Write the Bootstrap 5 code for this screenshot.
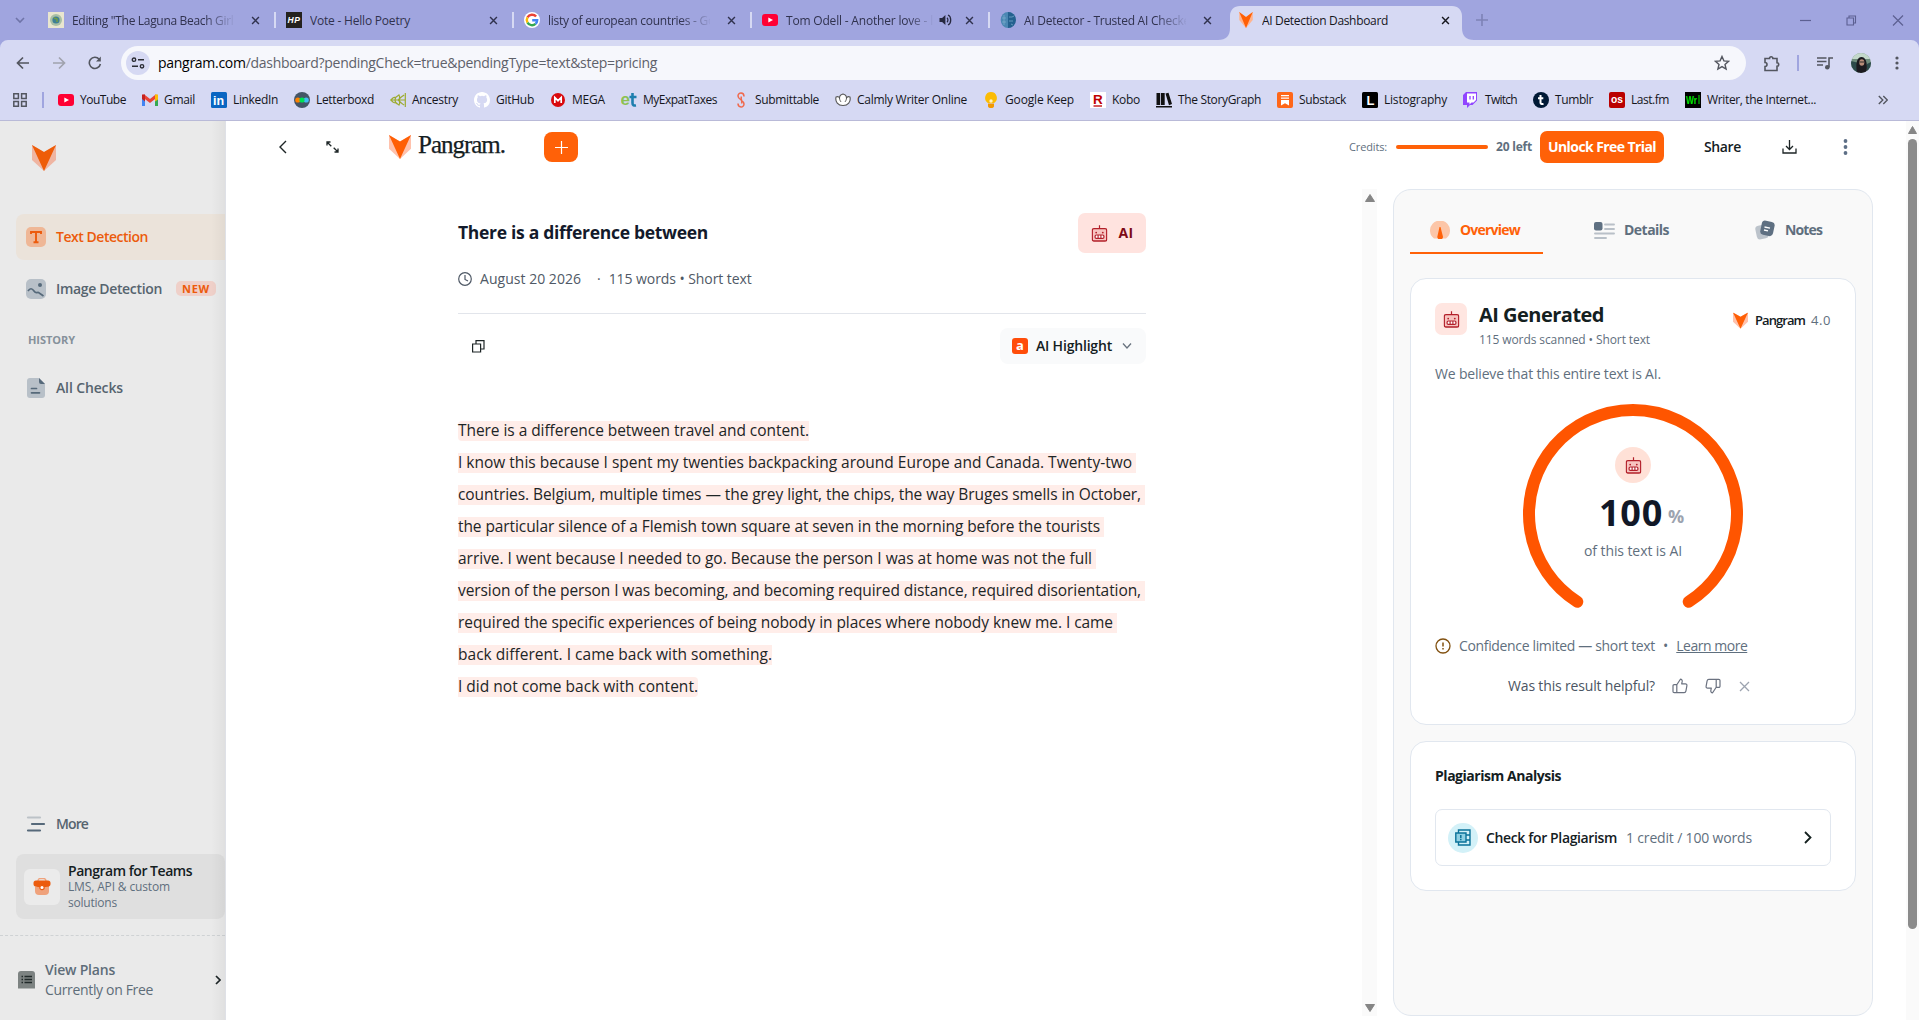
<!DOCTYPE html>
<html lang="en">
<head>
<meta charset="utf-8">
<title>AI Detection Dashboard</title>
<link href="https://cdn.jsdelivr.net/npm/bootstrap@5.3.0/dist/css/bootstrap.min.css" rel="stylesheet">
<style>
:root{--ui:"Open Sans","Noto Sans",sans-serif;--or:#ff5c00;--slate:#5f6f7e;--ink:#14201f;--line:#e1e7ef}
body{width:1919px;height:1020px;overflow:hidden;font-family:var(--ui);font-size:14px;line-height:20px;color:var(--ink);background:#fff}
svg{display:block;flex:none}
svg text{font-family:"Liberation Sans",sans-serif}
[data-w]{display:inline-block;white-space:nowrap;flex:none}
.w5{font-weight:550}.w6{font-weight:680}
.mut{color:var(--slate)}
/* browser chrome */
.tabstrip{height:40px;background:#a0a5df;padding-left:37px;font-size:12px;color:#30324e}
.btab{width:238px;padding:0 11px 0 11px;height:40px;position:relative;flex:none}
.btab::after{content:"";position:absolute;right:-1px;top:12px;width:2px;height:16px;background:#d6d9f3}
.btab.on::after,.btab.nosep::after{display:none}
.btab .ttl{width:162px;overflow:hidden;white-space:nowrap;margin-left:8px;padding-top:1px}
.btab .dim{-webkit-mask-image:linear-gradient(90deg,#000 132px,transparent 164px)}
.btab .snd{width:148px}
.btab .snd.dim{-webkit-mask-image:linear-gradient(90deg,#000 122px,transparent 148px)}
.btab.on{color:#16171d}
.shape{position:absolute;left:-9px;top:6px;z-index:0}
.btab.on>*:not(.shape){position:relative;z-index:1}
.toolbox{background:#d6d9f3;height:81px;border-bottom:1px solid #b9bad8;position:relative}
.addr{height:46px;padding:0 13px}
.omni{width:1625px;height:34px;border-radius:17px;background:#f6f7fc;padding:0 16px 0 5px;font-size:14px;color:#5e616a}
.tune{width:24px;height:24px;border-radius:50%;background:#d6d9f3}
.bm{height:34px;margin-top:-3px;font-size:12px;color:#15161c;padding-left:13px}
.bm .bmi{gap:6px;margin-right:16px}
.vbar{width:2px;height:16px;background:#a0a5df;flex:none}
/* page */
.page{height:899px}
.side{width:226px;background:#eaeaea;flex:none;border-right:1px solid #dfe1e7;position:relative}
.side::after{content:"";position:absolute;right:0;top:0;bottom:0;width:14px;background:linear-gradient(90deg,transparent,rgba(0,0,0,.045))}
.navi{height:45px;margin-left:16px;padding-left:10px;border-radius:8px 0 0 8px;color:#56646f;gap:10px}
.navi.on{background:#ebe3da;color:#ec5b0c;height:46px}
.newb{background:#efd0c9;color:#ec5b0c;border-radius:5px;height:15px;width:40px;font-size:11px;line-height:15px;margin-left:4px;font-weight:700}
.teams{margin-left:16px;height:65px;background:#dfdfdf;border-radius:8px;padding-left:8px;gap:8px}
.tbox{width:36px;height:36px;background:#ebebeb;border-radius:6px;flex:none}
.dash{border-top:1px dashed #cfd2d4}
.main{width:1680px;flex:none}
.hdr{height:52px}
.word{font-family:"Liberation Serif",serif;font-size:25px;line-height:30px;color:#14201f;font-weight:400;-webkit-text-stroke:.25px #14201f}
.plus{width:34px;height:30px;border-radius:8px;background:#ff6108}
.unlock{width:124px;height:32px;border-radius:7px;background:#ff6108;color:#fff}
.cbar{width:92px;height:4px;border-radius:2px;background:#ff6108}
.doc{width:688px;margin-left:232px}
.aib{width:68px;height:40px;border-radius:7px;background:#ffe3df;color:#7d0b15}
.hl{width:146px;height:36px;border-radius:8px;background:#f9fafb;padding-left:12px}
.abox{width:16px;height:16px;border-radius:3px;background:#ff4d0a;color:#fff;font-size:13px;line-height:14px;font-weight:700}
.ln{height:32px}
.ln>span{background:#ffede9;height:20px;line-height:19px;font-size:15.5px;color:#1d2526}
.rail{width:15px;background:#fafafa}
.panel{width:480px;height:827px;border:1px solid var(--line);border-radius:18px;background:#f9f9f9;padding:0 16px}
.tabs3{height:64px}
.pt{height:64px;border-bottom:2px solid transparent;padding-top:18px;gap:10px}
.pt.on{border-color:#ff6108;color:#ff6108}
.box{border:1px solid var(--line);border-radius:16px;background:#fff;padding:0 24px}
.rb{width:32px;height:32px;border-radius:7px;background:#ffe6e1}
.gauge{position:relative;height:206px}
.gauge .inr{position:absolute;inset:0}
.rc{width:36px;height:36px;border-radius:50%;background:#ffe1d7}
.chk{height:57px;border:1px solid var(--line);border-radius:7px;padding-left:12px;padding-right:18px}
.pc{width:30px;height:30px;border-radius:50%;background:#d3f1f8}
.sb{width:13px;background:#fafafa;flex:none}
.thumb{width:9px;height:790px;border-radius:5px;background:#8b8b8b;margin-left:2px}
</style>
<script src="https://cdn.jsdelivr.net/npm/bootstrap@5.3.0/dist/js/bootstrap.bundle.min.js"></script>
</head>
<body>
<svg width="0" height="0" class="position-absolute"><defs>
<symbol id="x" viewBox="0 0 10 10"><path d="M1.2 1.2l7.6 7.6M8.8 1.2l-7.6 7.6" stroke="currentColor" stroke-width="1.6" fill="none"/></symbol>
<symbol id="fox" viewBox="0 0 24 26"><path d="M0 0v15l12 11 12-11V0L12 7z" fill="#ffc2ad"/><path d="M0 0l12 7 12-7-12 26z" fill="#ff5f05"/></symbol>
<symbol id="foxs" viewBox="0 0 24 26"><path d="M0 0v15l12 11 12-11V0L12 7z" fill="#efb5a2"/><path d="M0 0l12 7 12-7-12 26z" fill="#ee5c08"/></symbol>
<symbol id="bot" viewBox="0 0 16 17"><rect x=".8" y="3.6" width="14.4" height="12.4" rx="1.6" fill="#f7c4c0" stroke="#b3202a" stroke-width="1.3"/><path d="M8 .2v3.4" stroke="#b3202a" stroke-width="1.2"/><circle cx="4.7" cy="7.6" r=".9" fill="#b3202a"/><circle cx="11.3" cy="7.6" r=".9" fill="#b3202a"/><rect x="3.6" y="10" width="8.8" height="3.4" rx="1.2" fill="#fff" stroke="#b3202a" stroke-width="1.2"/><path d="M6.6 10v3.4M9.4 10v3.4" stroke="#b3202a" stroke-width="1.1"/></symbol>
<symbol id="thumb" viewBox="0 0 16 16"><path d="M4.8 14.6H2.2A1.2 1.2 0 0 1 1 13.4V7.8a1.2 1.2 0 0 1 1.2-1.2h2.6zM4.8 6.8L8.400 1.2c1.3 0 2 1 1.8 2.2l-.5 2.500h3.700c1 0 1.700.8 1.500 1.800l-1 5.400c-.2.9-.8 1.500-1.700 1.500H4.800" fill="none" stroke="currentColor" stroke-width="1.2" stroke-linejoin="round"/></symbol>
<symbol id="yt" viewBox="0 0 16 16"><rect y="2" width="16" height="12" rx="3" fill="#ff0033"/><path d="M6.3 5.4v5.2L11 8z" fill="#fff"/></symbol>
</defs></svg>

<!-- tab strip -->
<div class="tabstrip d-flex align-items-center position-relative">
  <svg class="position-absolute" style="left:15px" width="10" height="10" viewBox="0 0 10 10"><path d="M1 3l4 4 4-4" fill="none" stroke="#6f74a8" stroke-width="1.6"/></svg>
  <div class="btab d-flex align-items-center"><svg width="16" height="16"><rect width="16" height="16" fill="#e9e6cf"/><circle cx="8" cy="8" r="6" fill="#a8bfa5"/><circle cx="8" cy="8" r="3.6" fill="#3d7f94"/><path d="M6 6l3 1v3" stroke="#75a03f" fill="none" stroke-width="1.4"/></svg><div class="ttl dim"><span data-w="166">Editing "The Laguna Beach Girl"</span></div><svg class="ms-auto" width="9" height="9" style="margin-right:4px"><use href="#x"/></svg></div>
  <div class="btab d-flex align-items-center"><svg width="16" height="16"><rect width="16" height="16" fill="#24221f"/><text x="1.5" y="11" font-size="8.5" font-style="italic" font-weight="700" fill="#fff" textLength="12.5">HP</text></svg><div class="ttl"><span data-w="100">Vote - Hello Poetry</span></div><svg class="ms-auto" width="9" height="9" style="margin-right:4px"><use href="#x"/></svg></div>
  <div class="btab d-flex align-items-center"><svg width="16" height="16" viewBox="0 0 16 16"><circle cx="8" cy="8" r="8" fill="#fff"/><g fill="none" stroke-width="2.4"><path d="M12.1 4.6A5.2 5.2 0 0 0 3.5 5.4" stroke="#ea4335"/><path d="M3.5 5.4a5.2 5.2 0 0 0 0 5.2" stroke="#fbbc05"/><path d="M3.5 10.6a5.2 5.2 0 0 0 8 1.3" stroke="#34a853"/><path d="M11.5 11.9A5 5 0 0 0 13.2 8.2H8.2" stroke="#4285f4"/></g></svg><div class="ttl dim"><span data-w="167">listy of european countries - Go</span></div><svg class="ms-auto" width="9" height="9" style="margin-right:4px"><use href="#x"/></svg></div>
  <div class="btab d-flex align-items-center"><svg width="16" height="16"><use href="#yt"/></svg><div class="ttl snd dim"><span data-w="147">Tom Odell - Another love - l</span></div><svg style="margin-left:5px" width="13" height="12" viewBox="0 0 13 12"><path d="M.5 4h2.6L6.400 1v10L3.100 8H.5z" fill="#26283f"/><path d="M8 3.800c1.200 1 1.200 3.400 0 4.400M9 1c3.600 1.600 3.600 8.400 0 10" stroke="#26283f" stroke-width="1.3" fill="none"/></svg><svg class="ms-auto" width="9" height="9" style="margin-right:4px"><use href="#x"/></svg></div>
  <div class="btab nosep d-flex align-items-center"><svg width="16" height="16" viewBox="0 0 16 16"><ellipse cx="8" cy="8" rx="7.3" ry="8" fill="#4b87b3"/><path d="M8 0v16a8 8 0 0 0 0-16z" fill="#24618f"/><path d="M2 6h4M2 10h4M4 3v10M9 5h3l2-1M9 9h4M11 12l2 1" stroke="#7fb0d0" stroke-width=".7" fill="none"/></svg><div class="ttl dim"><span data-w="166">AI Detector - Trusted AI Checke</span></div><svg class="ms-auto" width="9" height="9" style="margin-right:4px"><use href="#x"/></svg></div>
  <div class="btab on d-flex align-items-center"><svg class="shape" width="256" height="34" viewBox="0 0 256 34"><path d="M0 34c8 0 12-4 12-12V10C12 4 16 0 22 0h212c6 0 10 4 10 10v12c0 8 4 12 12 12z" fill="#d6d9f3"/></svg><svg width="16" height="16" viewBox="0 0 24 26"><path d="M1 0v13l11 13 11-13V0L12 8z" fill="#ffb48f"/><path d="M1 0l11 8 11-8-11 26z" fill="#ff5f05"/></svg><div class="ttl"><span data-w="126">AI Detection Dashboard</span></div><svg class="ms-auto" width="9" height="9" style="margin-right:4px"><use href="#x"/></svg></div>
  <svg style="margin-left:11px" width="12" height="12"><path d="M6 0v12M0 6h12" stroke="#7d82b6" stroke-width="1.6"/></svg>
  <svg style="margin-left:312px" width="11" height="11"><path d="M0 5.5h11" stroke="#5c6092" stroke-width="1.2"/></svg>
  <svg style="margin-left:35px" width="11" height="11"><path d="M1 3h6.5v7H1zM3 3V1h6.5v7H7.6" fill="none" stroke="#5c6092" stroke-width="1.1"/></svg>
  <svg style="margin-left:35px" width="12" height="11"><path d="M1 .5l10 10M11 .5l-10 10" stroke="#5c6092" stroke-width="1.2"/></svg>
</div>

<!-- address bar and bookmarks -->
<div class="toolbox">
  <svg class="position-absolute start-0 top-0" width="8" height="8"><path d="M0 0h8a8 8 0 0 0-8 8z" fill="#a0a5df"/></svg>
  <svg class="position-absolute end-0 top-0" width="8" height="8"><path d="M8 0H0a8 8 0 0 1 8 8z" fill="#a0a5df"/></svg>
  <div class="addr d-flex align-items-center">
    <svg style="margin-left:3px" width="14" height="14"><path d="M13 7H2M7 1.5L1.5 7 7 12.5" fill="none" stroke="#53565f" stroke-width="1.7"/></svg>
    <svg style="margin-left:22px" width="14" height="14"><path d="M1 7h11M7 1.5L12.5 7 7 12.5" fill="none" stroke="#a0a2ad" stroke-width="1.7"/></svg>
    <svg style="margin-left:22px" width="14" height="14"><path d="M12.4 8A5.6 5.6 0 1 1 11.2 3.2" fill="none" stroke="#53565f" stroke-width="1.6"/><path d="M12.8.5v5H8z" fill="#53565f"/></svg>
    <div class="omni d-flex align-items-center" style="margin-left:19px">
      <div class="tune d-flex align-items-center justify-content-center"><svg width="14" height="12"><g fill="none" stroke="#2b2d35" stroke-width="1.4"><circle cx="3" cy="2.7" r="1.7"/><path d="M7 2.7h6M1 9.3h6"/><circle cx="11" cy="9.3" r="1.7"/></g></svg></div>
      <span data-w="499" style="margin-left:8px"><span class="text-black">pangram.com</span>/dashboard?pendingCheck=true&amp;pendingType=text&amp;step=pricing</span>
      <svg class="ms-auto" width="16" height="16" viewBox="0 0 16 16"><path d="M8 1.5l1.900 4.400 4.700.4-3.600 3.100 1.100 4.700L8 11.600l-4.100 2.500 1.100-4.700L1.400 6.300l4.700-.4z" fill="none" stroke="#53565f" stroke-width="1.4"/></svg>
    </div>
    <svg style="margin-left:18px" width="16" height="17"><path d="M1 3.500h4.500a1.600 1.600 0 0 1 3.400 0H13v4.300a1.600 1.600 0 0 1 0 3.400V15.500H1V11.500a2 2 0 0 0 0-4z" fill="none" stroke="#53565f" stroke-width="1.600"/></svg>
    <div class="vbar" style="margin-left:17px"></div>
    <svg style="margin-left:18px" width="16" height="15"><path d="M0 2h9.500M0 5.500h9.500M0 9h6M12 11V2h4" fill="none" stroke="#53565f" stroke-width="1.600"/><circle cx="10.300" cy="11.200" r="2.300" fill="#53565f"/></svg>
    <svg style="margin-left:18px" width="20" height="20" viewBox="0 0 20 20"><clipPath id="av"><circle cx="10" cy="10" r="10"/></clipPath><g clip-path="url(#av)"><path d="M0 0h20v20H0z" fill="#6f8c7c"/><path d="M0 0h20v6H0z" fill="#c3d8ca"/><path d="M0 8l8 2v10H0zM20 9l-4 2v9h4z" fill="#2c4a4a"/><path d="M6 20C4 8 7 4 10.500 4S17 8 15.500 20z" fill="#1b1a1f"/><ellipse cx="10.800" cy="9.500" rx="2.500" ry="3.300" fill="#b98d79"/><path d="M8.500 9h4.600" stroke="#222" stroke-width=".9"/></g></svg>
    <svg style="margin-left:24px" width="4" height="14"><g fill="#53565f"><circle cx="2" cy="2" r="1.600"/><circle cx="2" cy="7" r="1.600"/><circle cx="2" cy="12" r="1.600"/></g></svg>
  </div>
  <div class="bm d-flex align-items-center">
    <svg width="14" height="14"><path d="M.8.8h4.600v4.600H.8zM8.600.8h4.600v4.600H8.600zM.8 8.600h4.600v4.600H.8zM8.600 8.600h4.600v4.600H8.600z" fill="none" stroke="#53565f" stroke-width="1.5"/></svg>
    <div class="vbar" style="margin:0 14px 0 15px"></div>
    <div class="bmi d-flex align-items-center"><svg width="16" height="16"><use href="#yt"/></svg><span data-w="46">YouTube</span></div>
    <div class="bmi d-flex align-items-center"><svg width="16" height="16"><path d="M1.500 14V4" stroke="#4285f4" stroke-width="3"/><path d="M14.500 14V4" stroke="#34a853" stroke-width="3"/><path d="M1 3.500l7 5.500 7-5.500" stroke="#ea4335" stroke-width="3.200" fill="none"/><path d="M13 2.500h3v5l-3 2z" fill="#fbbc04"/><path d="M0 2.500h3v7L0 7z" fill="#c5221f"/></svg><span data-w="31">Gmail</span></div>
    <div class="bmi d-flex align-items-center"><svg width="16" height="16"><rect width="16" height="16" rx="1.500" fill="#0a66c2"/><text x="2" y="13" font-size="12.500" font-weight="700" fill="#fff">in</text></svg><span data-w="45">LinkedIn</span></div>
    <div class="bmi d-flex align-items-center"><svg width="16" height="16"><circle cx="8" cy="8" r="8" fill="#445566"/><circle cx="3.800" cy="8" r="2.600" fill="#ff8000"/><circle cx="12.200" cy="8" r="2.600" fill="#40bcf4"/><circle cx="8" cy="8" r="2.600" fill="#00e054"/></svg><span data-w="58">Letterboxd</span></div>
    <div class="bmi d-flex align-items-center"><svg width="16" height="16"><g fill="none" stroke="#9cab2f" stroke-width="1.200"><path d="M15.300 1v14M0 8h15M5 8c0-4 3-4 4-5 1 2 1 4-1 5M9 8c1-3 3-3 5-5M5 8c0 4 3 4 4 5 1-2 1-4-1-5M9 8c1 3 3 3 5 5M1 8c2-3 3-3 5-3M1 8c2 3 3 3 5 3"/></g></svg><span data-w="46">Ancestry</span></div>
    <div class="bmi d-flex align-items-center"><svg width="16" height="16" viewBox="0 0 16 16"><path fill="#fff" d="M8 0C3.580 0 0 3.580 0 8c0 3.540 2.290 6.530 5.470 7.590.4.070.55-.17.55-.38 0-.19-.01-.82-.01-1.490-2.010.37-2.530-.49-2.690-.94-.09-.23-.48-.94-.82-1.130-.28-.15-.68-.52-.01-.53.63-.01 1.080.58 1.230.82.72 1.210 1.870.87 2.330.66.07-.52.28-.87.51-1.070-1.780-.2-3.640-.89-3.640-3.950 0-.87.31-1.590.82-2.150-.08-.2-.36-1.020.08-2.120 0 0 .67-.21 2.200.82a7.600 7.600 0 0 1 4 0c1.530-1.040 2.200-.82 2.200-.82.44 1.100.16 1.920.08 2.120.51.56.82 1.270.82 2.150 0 3.070-1.870 3.750-3.650 3.950.29.25.54.73.54 1.480 0 1.070-.01 1.930-.01 2.200 0 .21.15.46.55.38A8 8 0 0 0 16 8c0-4.420-3.580-8-8-8"/></svg><span data-w="38">GitHub</span></div>
    <div class="bmi d-flex align-items-center"><svg width="16" height="16"><circle cx="8" cy="8" r="7" fill="#d9090d"/><path d="M4.800 11V5.500L8 8.700l3.200-3.200V11" fill="none" stroke="#fff" stroke-width="1.700"/></svg><span data-w="33">MEGA</span></div>
    <div class="bmi d-flex align-items-center"><svg width="16" height="16"><text x="-.5" y="12.500" font-size="17" font-weight="700" fill="#8cc152">e</text><path d="M11.500 1v10q0 3 3.500 2.500M8.500 5h7" stroke="#1f7fae" stroke-width="2.600" fill="none"/></svg><span data-w="74">MyExpatTaxes</span></div>
    <div class="bmi d-flex align-items-center"><svg width="16" height="16"><path d="M11 4.500C11 0 5 0 5 4s6 4 6 8-6 4-6-.5M8.500 4.500c-1.500 2 1.500 5 0 7" fill="none" stroke="#f0694c" stroke-width="1.500"/></svg><span data-w="64">Submittable</span></div>
    <div class="bmi d-flex align-items-center"><svg width="16" height="16"><path d="M1 5c2-1 3 0 3.500 1C4.500 4 6 2.500 8 2c2 .5 3.500 2 3.500 4 .5-1 1.500-2 3.500-1 1 5-2 8.500-7 8.500S0 10 1 5z" fill="#fff" stroke="#555" stroke-width="1.100"/><path d="M4.500 6c0 2 1 3 1.500 4M11.500 6c0 2-1 3-1.500 4" stroke="#555" fill="none"/></svg><span data-w="110">Calmly Writer Online</span></div>
    <div class="bmi d-flex align-items-center"><svg width="16" height="16"><path d="M8 0a6 6 0 0 0-3.200 11h6.400A6 6 0 0 0 8 0z" fill="#fbbc04"/><path d="M5 11.500h6V14q0 2-3 2t-3-2z" fill="#f29900"/><circle cx="8" cy="9" r="1.700" fill="#fff3c4"/></svg><span data-w="69">Google Keep</span></div>
    <div class="bmi d-flex align-items-center"><svg width="16" height="16"><rect width="16" height="16" fill="#fff"/><text x="3" y="12" font-size="13.500" font-weight="700" fill="#bf0000">R</text><path d="M3.500 14h8.500" stroke="#bf0000" stroke-width="1.300"/></svg><span data-w="28">Kobo</span></div>
    <div class="bmi d-flex align-items-center"><svg width="16" height="16"><path d="M.5 1h3.700v12H.5zM5 1h3.700v12H5zM9.500 1.500l3-.8L16 12l-3 1.200zM0 14h16v1.500H0z" fill="#111"/></svg><span data-w="83">The StoryGraph</span></div>
    <div class="bmi d-flex align-items-center"><svg width="16" height="16"><rect width="16" height="16" rx="2" fill="#ff6719"/><path d="M4 3h8v1.300H4zM4 5.500h8v1.300H4zM4 8h8v5.500L8 11.300l-4 2.200z" fill="#fff"/></svg><span data-w="47">Substack</span></div>
    <div class="bmi d-flex align-items-center"><svg width="16" height="16"><rect width="16" height="16" rx="1.500" fill="#000"/><text x="4.500" y="13" font-size="13" font-weight="700" fill="#fff">L</text></svg><span data-w="63">Listography</span></div>
    <div class="bmi d-flex align-items-center"><svg width="16" height="16"><path d="M3 0L0 3v10h4v3l3-3h2.500L14 8.500V0z" fill="#9146ff"/><path d="M4 1.500h9V8l-2.500 2.500h-2L6.500 12.500v-2H4z" fill="#fff"/><path d="M7 4v3.500M10.300 4v3.500" stroke="#9146ff" stroke-width="1.300"/></svg><span data-w="32">Twitch</span></div>
    <div class="bmi d-flex align-items-center"><svg width="16" height="16"><circle cx="8" cy="8" r="8" fill="#001935"/><path d="M7.500 3v7.500q0 2 3 1.500M5 6.200h5.300" stroke="#fff" stroke-width="2" fill="none"/></svg><span data-w="38">Tumblr</span></div>
    <div class="bmi d-flex align-items-center"><svg width="16" height="16"><rect width="16" height="16" rx="2" fill="#ba0000"/><text x="2" y="11" font-size="10" font-weight="700" fill="#fff" textLength="12" lengthAdjust="spacingAndGlyphs">os</text></svg><span data-w="38">Last.fm</span></div>
    <div class="bmi d-flex align-items-center"><svg width="16" height="16"><rect width="16" height="16" fill="#000"/><text x="1" y="11.500" font-size="10" font-weight="700" fill="#00e600" textLength="11" lengthAdjust="spacingAndGlyphs">Wr</text><path d="M14 3v9" stroke="#00e600"/></svg><span data-w="109">Writer, the Internet...</span></div>
    <svg style="margin-left:46px" width="10" height="10"><path d="M.8 1L4.800 5l-4 4M5.300 1l4 4-4 4" fill="none" stroke="#53565f" stroke-width="1.400"/></svg>
  </div>
</div>

<div class="page d-flex">
  <!-- sidebar -->
  <aside class="side d-flex flex-column">
    <svg style="margin:24px 0 43px 32px" width="24" height="26"><use href="#foxs"/></svg>
    <div class="navi on d-flex align-items-center w5"><svg width="20" height="20"><rect width="20" height="20" rx="5" fill="#efb796"/><path d="M5 7V5h10v2M10 5v10M7.500 15.200h5" stroke="#ec5b0c" stroke-width="1.900" fill="none"/></svg><span data-w="92">Text Detection</span></div>
    <div class="navi d-flex align-items-center w5" style="margin-top:6px"><svg width="20" height="20"><rect width="20" height="20" rx="5" fill="#b8c0c8"/><circle cx="14" cy="6" r="2" fill="#56697a"/><path d="M2 12c2-3 4-3 6 0s3 1 4.500 1.500L17.500 17" stroke="#56697a" stroke-width="1.700" fill="none"/></svg><span data-w="106">Image Detection</span><div class="newb text-center"><span data-w="28">NEW</span></div></div>
    <div class="w6" style="margin:19px 0 0 28px;height:20px;font-size:11px;color:#86919b"><span data-w="47">HISTORY</span></div>
    <div class="navi d-flex align-items-center w5" style="margin-top:15px"><svg width="20" height="20"><path d="M4 0h9l6 6v11a3 3 0 0 1-3 3H4a3 3 0 0 1-3-3V3a3 3 0 0 1 3-3z" fill="#b8c0c8"/><path d="M13 0l6 6h-4q-2 0-2-2z" fill="#56697a"/><path d="M5.500 10.500h5M5.500 14.800h8" stroke="#56697a" stroke-width="1.700" stroke-linecap="round"/></svg><span data-w="67">All Checks</span></div>
    <div class="mt-auto navi d-flex align-items-center w5"><svg width="20" height="18"><g stroke-width="2.200" stroke-linecap="round"><path d="M2 2.500h12" stroke="#bcc2c7"/><path d="M6 9h12M2 15.500h12" stroke="#56697a"/></g></svg><span data-w="32">More</span></div>
    <div class="teams d-flex align-items-center" style="margin-top:8px">
      <div class="tbox d-flex align-items-center justify-content-center"><svg width="18" height="18"><path d="M5 3q0-2.500 2.500-2.500h3Q13 .5 13 3" fill="none" stroke="#efa27c" stroke-width="1.300"/><path d="M2 7h14v6a4 4 0 0 1-4 4H6a4 4 0 0 1-4-4z" fill="#efa27c"/><path d="M3 2.500h12a2.500 2.500 0 0 1 2.500 2.500v1c0 3-3 3-8.500 3S.5 9 .5 6V5A2.500 2.500 0 0 1 3 2.500z" fill="#ec5b0c"/><circle cx="9" cy="9.500" r="2.200" fill="#fff" stroke="#ec5b0c" stroke-width="1.200"/></svg></div>
      <div style="margin-top:-1px"><div class="w5" style="line-height:17px"><span data-w="124">Pangram for Teams</span></div><div class="mut" style="font-size:12px;line-height:16px"><span data-w="102">LMS, API &amp; custom</span><br><span data-w="49">solutions</span></div></div>
    </div>
    <div class="dash" style="margin-top:16px"></div>
    <div class="d-flex align-items-center" style="height:84px;padding:3px 0 0 18px;gap:10px;color:#5e6d79"><svg width="17" height="18"><path d="M0 3a3 3 0 0 1 3-3h11a3 3 0 0 1 3 3v14.500H0z" fill="#7d8382"/><path d="M3.500 5.500h1.500M6.500 5.500h7.500M3.500 8.500h1.500M6.500 8.500h7.500M3.500 11.500h1.500M6.500 11.500h7.500" stroke="#222b2b" stroke-width="1.300"/></svg><div><div class="w5"><span data-w="70">View Plans</span></div><div><span data-w="108">Currently on Free</span></div></div><svg class="ms-auto" style="margin-right:4px" width="6" height="10"><path d="M1 1l4 4-4 4" stroke="#1d2526" stroke-width="1.700" fill="none"/></svg></div>
  </aside>

  <main class="main">
    <!-- page header -->
    <div class="hdr d-flex align-items-center">
      <svg style="margin-left:53px" width="8" height="14"><path d="M7 1L1 7l6 6" fill="none" stroke="#1d2526" stroke-width="1.400"/></svg>
      <svg style="margin-left:39px" width="13" height="12"><path d="M1 4.500V1h3.500M1 1l4.300 4.300M12 7.500V11H8.500M12 11L7.700 6.700" fill="none" stroke="#1d2526" stroke-width="1.300"/></svg>
      <svg style="margin-left:50px" width="22" height="24" viewBox="0 0 24 26"><use href="#fox"/></svg>
      <span class="word" data-w="87" style="margin:-5px 0 0 7px">Pangram.</span>
      <div class="plus d-flex align-items-center justify-content-center" style="margin-left:39px"><svg width="13" height="13"><path d="M6.500 0v13M0 6.500h13" stroke="#fff" stroke-width="1.200"/></svg></div>
      <span class="mut" data-w="38" style="margin-left:771px;font-size:11px">Credits:</span>
      <div class="cbar" style="margin-left:9px"></div>
      <span class="mut w6" data-w="36" style="margin-left:8px;font-size:12px">20 left</span>
      <div class="unlock d-flex align-items-center justify-content-center w6" style="margin-left:8px"><span data-w="108">Unlock Free Trial</span></div>
      <span class="w5" data-w="37" style="margin-left:40px">Share</span>
      <svg style="margin-left:41px" width="15" height="14"><path d="M1 8.500V13h13V8.500M7.500 0v9M4 6l3.500 3.500L11 6" fill="none" stroke="#1d2526" stroke-width="1.300"/></svg>
      <svg style="margin-left:46px" width="5" height="16"><g fill="#5d6f86"><circle cx="2.500" cy="2" r="1.900"/><circle cx="2.500" cy="8" r="1.900"/><circle cx="2.500" cy="14" r="1.900"/></g></svg>
    </div>
    <div class="d-flex" style="padding-top:16px">
      <!-- document -->
      <section class="doc" style="padding-top:24px">
        <div class="d-flex align-items-center justify-content-between"><span class="w6" data-w="250" style="font-size:17.500px;line-height:24px;color:#131a2b;margin-top:-2px">There is a difference between</span><div class="aib d-flex align-items-center justify-content-center w6"><svg width="17" height="17" viewBox="0 0 16 17"><use href="#bot"/></svg><span data-w="15" style="margin-left:11px">AI</span></div></div>
        <div class="d-flex align-items-center" style="height:20px;margin-top:16px;color:#4f5966"><svg width="14" height="14"><circle cx="7" cy="7" r="6.300" fill="none" stroke="#4f5966" stroke-width="1.200"/><path d="M7 3v4.500l3 1.500" fill="none" stroke="#4f5966" stroke-width="1.200"/></svg><span data-w="101" style="margin-left:8px">August 20 2026</span><span style="margin-left:16px">·</span><span data-w="143" style="margin-left:8px">115 words • Short text</span></div>
        <div style="border-top:1px solid #e2e5eb;margin-top:24px"></div>
        <div class="d-flex align-items-center justify-content-between" style="margin-top:14px"><svg style="margin-left:14px" width="13" height="13"><path d="M.6 4h8v8h-8zM4 4V.6h8V9H8.600" fill="none" stroke="#1d2526" stroke-width="1.200"/></svg><div class="hl d-flex align-items-center w5"><div class="abox text-center">a</div><span data-w="76" style="margin-left:8px">AI Highlight</span><svg style="margin-left:10px" width="10" height="8"><path d="M1 1.500l4 4.500 4-4.500" fill="none" stroke="#69737f" stroke-width="1.300"/></svg></div></div>
        <div style="margin-top:51px">
          <div class="ln d-flex align-items-center"><span class="rounded-start-1" data-w="351">There is a difference between travel and content.</span></div>
          <div class="ln d-flex align-items-center"><span class="pe-1" data-w="678">I know this because I spent my twenties backpacking around Europe and Canada. Twenty-two</span></div>
          <div class="ln d-flex align-items-center"><span class="pe-1" data-w="687">countries. Belgium, multiple times — the grey light, the chips, the way Bruges smells in October,</span></div>
          <div class="ln d-flex align-items-center"><span class="pe-1" data-w="646">the particular silence of a Flemish town square at seven in the morning before the tourists</span></div>
          <div class="ln d-flex align-items-center"><span class="pe-1" data-w="638">arrive. I went because I needed to go. Because the person I was at home was not the full</span></div>
          <div class="ln d-flex align-items-center"><span class="pe-1" data-w="687">version of the person I was becoming, and becoming required distance, required disorientation,</span></div>
          <div class="ln d-flex align-items-center"><span class="pe-1" data-w="659">required the specific experiences of being nobody in places where nobody knew me. I came</span></div>
          <div class="ln d-flex align-items-center"><span data-w="314">back different. I came back with something.</span></div>
          <div class="ln d-flex align-items-center"><span class="rounded-end-1" data-w="240">I did not come back with content.</span></div>
        </div>
      </section>
      <div class="rail d-flex flex-column align-items-center justify-content-between" style="margin-left:216px;height:827px;padding:5px 0 4px"><svg width="10" height="8"><path d="M5 0.500L9.500 7.500h-9z" fill="#858585" stroke="#858585" stroke-linejoin="round"/></svg><svg width="10" height="8"><path d="M5 7.500L9.500.5h-9z" fill="#858585" stroke="#858585" stroke-linejoin="round"/></svg></div>

      <!-- results panel -->
      <aside class="panel" style="margin-left:16px">
        <div class="tabs3 d-flex w5 mut">
          <div class="pt on d-flex align-items-center" style="width:133px;padding-left:20px"><svg width="20" height="18"><path d="M4 17.500a10 10 0 1 1 12 0z" fill="#fcc6a8"/><path d="M9.500 6l1 0 2.300 9a2.800 2.800 0 1 1-5.300 0z" fill="#ff6108"/></svg><span class="w6" data-w="60">Overview</span></div>
          <div class="pt d-flex align-items-center" style="margin-left:51px"><svg width="21" height="17"><rect y="0" width="8.500" height="8.500" rx="2" fill="#5f7082"/><path d="M11 2.500h9M11 7h9M1 11.500h19M1 16h11" stroke="#b9c0c8" stroke-width="1.900" stroke-linecap="round"/></svg><span class="w6" data-w="45" style="margin-left:-1px">Details</span></div>
          <div class="pt d-flex align-items-center" style="margin-left:86px"><svg width="20" height="20"><rect x="1" y="5" width="12" height="14" rx="3.500" transform="rotate(-12 7 12)" fill="#bcc3cb"/><rect x="6" y="1" width="13" height="14.500" rx="3.500" transform="rotate(12 12 8)" fill="#5f7082"/><path d="M9.500 7l5.500 1.200M9 10l4 .9" stroke="#fff" stroke-width="1.300"/></svg><span class="w6" data-w="37">Notes</span></div>
        </div>
        <div class="box" style="height:447px;margin-top:24px">
          <div class="d-flex" style="padding-top:23px">
            <div class="rb d-flex align-items-center justify-content-center" style="margin-top:1px"><svg width="17" height="17" viewBox="0 0 16 17"><use href="#bot"/></svg></div>
            <div style="margin-left:12px"><div class="w6" style="font-size:20px;line-height:26px"><span data-w="125">AI Generated</span></div><div class="mut" style="font-size:12px;line-height:16px;margin-top:4px"><span data-w="171">115 words scanned • Short text</span></div></div>
            <div class="d-flex align-items-center ms-auto" style="height:36px;font-size:13px"><svg width="15" height="17" viewBox="0 0 24 26"><use href="#fox"/></svg><span class="w5" data-w="50" style="margin-left:7px">Pangram</span><span class="mut" data-w="20" style="margin-left:6px">4.0</span></div>
          </div>
          <div class="mut" style="margin-top:16px"><span data-w="226">We believe that this entire text is AI.</span></div>
          <div class="gauge" style="margin-top:19px">
            <svg class="mx-auto" width="222" height="206" viewBox="-111 -111 222 206"><path d="M-55.700 87.800A104 104 0 1 1 55.700 87.800" fill="none" stroke="#ff5500" stroke-width="12" stroke-linecap="round"/></svg>
            <div class="inr d-flex flex-column align-items-center" style="padding-top:44px">
              <div class="rc d-flex align-items-center justify-content-center"><svg width="17" height="17" viewBox="0 0 16 17"><use href="#bot"/></svg></div>
              <div class="d-flex align-items-center" style="height:40px;margin:10px 0 0 18px"><span data-w="64" style="font-size:36px;font-weight:700;color:#111827">100</span><span class="w6" data-w="17" style="font-size:18px;color:#9ca3af;margin:6px 0 0 5px">%</span></div>
              <div class="mut" style="margin-top:8px"><span data-w="98">of this text is AI</span></div>
            </div>
          </div>
          <div class="mut d-flex align-items-center" style="height:20px;margin-top:27px"><svg width="16" height="16"><circle cx="8" cy="8" r="7" fill="none" stroke="#81500f" stroke-width="1.300"/><path d="M8 4.500v4M8 10v1.500" stroke="#81500f" stroke-width="1.500"/></svg><span data-w="196" style="margin-left:8px">Confidence limited — short text</span><span style="margin:0 8px">•</span><span class="text-decoration-underline" data-w="71">Learn more</span></div>
          <div class="d-flex align-items-center" style="height:20px;margin:20px 0 0 73px;color:#4b5563"><span data-w="147">Was this result helpful?</span><svg style="margin-left:17px;color:#6b7280" width="16" height="16"><use href="#thumb"/></svg><svg style="margin-left:17px;color:#6b7280;transform:rotate(180deg)" width="16" height="16"><use href="#thumb"/></svg><svg style="margin-left:18px" width="11" height="11"><path d="M1 1l9 9M10 1l-9 9" stroke="#9ca3af" stroke-width="1.300"/></svg></div>
        </div>
        <div class="box" style="height:150px;margin-top:16px">
          <div class="w6" style="padding-top:24px"><span data-w="126">Plagiarism Analysis</span></div>
          <div class="chk d-flex align-items-center" style="margin-top:23px"><div class="pc d-flex align-items-center justify-content-center"><svg width="16" height="17"><path d="M3.500 4V1H15v15H3.500v-3M11 6h4M11 11h4" fill="none" stroke="#0b7299" stroke-width="1.400"/><path d="M.8 4H11v9H.8z" fill="#8fd0e3" stroke="#0b7299" stroke-width="1.400"/><path d="M5.800 6v3.200M5.800 10v1.200" stroke="#0b7299" stroke-width="1.500"/></svg></div><span class="w5" data-w="131" style="margin-left:8px">Check for Plagiarism</span><span class="mut" data-w="126" style="margin-left:9px">1 credit / 100 words</span><svg class="ms-auto" width="8" height="13"><path d="M1 1l5.500 5.500L1 12" stroke="#14201f" stroke-width="1.800" fill="none"/></svg></div>
        </div>
      </aside>
    </div>
  </main>
  <div class="sb"><svg style="margin:5px 0 5px 2px" width="9" height="8"><path d="M4.500.5l4 7h-8z" fill="#858585" stroke="#858585" stroke-linejoin="round"/></svg><div class="thumb"></div></div>
</div>
<script>
// Track each label so that its glyph run fills the width given in data-w.
document.querySelectorAll('[data-w]').forEach(function (el) {
  var pad = parseFloat(getComputedStyle(el).paddingRight) || 0;
  var want = parseFloat(el.dataset.w) - pad;
  var has = el.getBoundingClientRect().width - pad;
  el.style.letterSpacing = ((want - has) / el.textContent.length) + 'px';
});
</script>
</body>
</html>
